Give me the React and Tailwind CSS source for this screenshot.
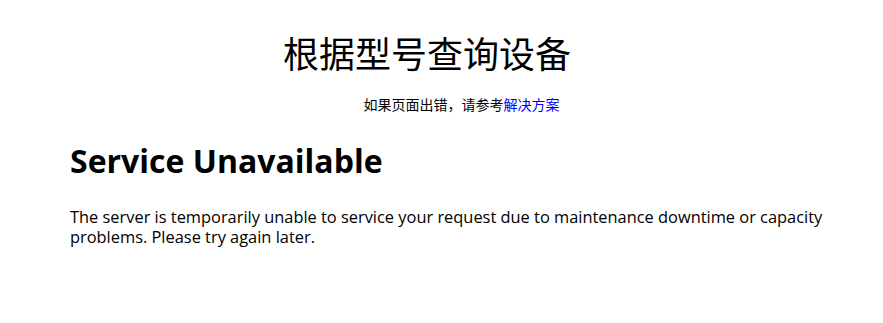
export default function App() {
  return (
    <div className="min-h-screen bg-white pt-[34px] text-black font-['Open_Sans','Noto_Sans_CJK_SC',sans-serif]">
      <h1 className="pr-[29px] text-center text-[36px] leading-[36px] font-normal font-['Noto_Sans_CJK_SC',sans-serif]">
        根据型号查询设备
      </h1>
      <p className="mt-[27px] pl-[40px] text-center text-[14px] leading-[15px] font-['Noto_Sans_CJK_SC',sans-serif]">
        如果页面出错，请参考<a href="#" className="text-[#0000ff]">解决方案</a>
      </p>
      <div className="mt-[33px] pl-[70px]">
        <h2 className="text-[32px] leading-[32px] font-bold">Service Unavailable</h2>
        <p className="mt-[30px] w-[790px] text-[16.4px] leading-[20px]">
          The server is temporarily unable to service your request due to maintenance downtime or capacity
          problems. Please try again later.
        </p>
      </div>
    </div>
  );
}
